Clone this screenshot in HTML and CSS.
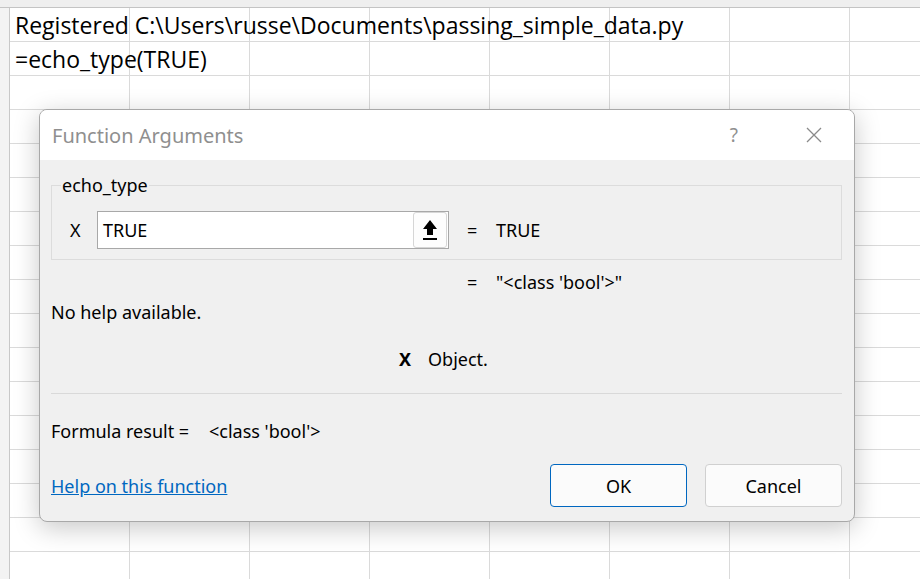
FILE: index.html
```html
<!DOCTYPE html>
<html lang="en">
<head>
<meta charset="utf-8">
<title>Function Arguments</title>
<link rel="stylesheet" href="styles.css">
</head>
<body>
<div class="sheet">
  <div class="colhead"></div>
  <div class="sheet-body">
    <div class="rowhead"></div>
    <div class="cells">
      <div class="cell-row"><span class="cell-text">Registered C:\Users\russe\Documents\passing_simple_data.py</span></div>
      <div class="cell-row"><span class="cell-text">=echo_type(TRUE)</span></div>
    </div>
  </div>

  <div class="dialog">
    <div class="titlebar">
      <span class="title">Function Arguments</span>
      <span class="help-q">?</span>
      <span class="close">
        <svg width="16" height="16" viewBox="0 0 16 16"><path d="M1 1 L15 15 M15 1 L1 15" stroke="#8a8a8a" stroke-width="1.3" fill="none"/></svg>
      </span>
    </div>
    <div class="dlg-body">
      <fieldset class="group">
        <legend class="legend">echo_type</legend>
        <div class="arg-row">
          <span class="arg-label">X</span>
          <div class="arg-input">
            <span class="arg-value">TRUE</span>
            <span class="collapse-btn">
              <svg width="16" height="22" viewBox="0 0 16 22"><path d="M8 1 L15 10 L11 10 L11 16 L5 16 L5 10 L1 10 Z" fill="#000"/><rect x="1" y="19" width="14" height="2" fill="#000"/></svg>
            </span>
          </div>
          <span class="eq">=</span>
          <span class="eq-val">TRUE</span>
        </div>
      </fieldset>
      <div class="result-row">
        <span class="eq">=</span>
        <span class="eq-val">"&lt;class 'bool'&gt;"</span>
      </div>
      <div class="desc">No help available.</div>
      <div class="arg-desc"><span class="arg-desc-x">X</span><span>Object.</span></div>
      <div class="sep"></div>
      <div class="formula"><span class="formula-label">Formula result =</span><span>&lt;class 'bool'&gt;</span></div>
      <div class="footer">
        <a class="link" href="#">Help on this function</a>
        <div class="buttons">
          <button class="btn btn-ok">OK</button>
          <button class="btn">Cancel</button>
        </div>
      </div>
    </div>
  </div>
</div>
</body>
</html>
```

FILE: styles.css
```css
html, body {
  margin: 0;
  padding: 0;
}
body {
  width: 920px;
  height: 579px;
  overflow: hidden;
  background: #fff;
  font-family: "Noto Sans", "DejaVu Sans", sans-serif;
}
.sheet {
  position: relative;
  width: 920px;
  height: 579px;
  display: flex;
  flex-direction: column;
}
.colhead {
  height: 7px;
  background: #efefef;
  border-bottom: 1px solid #c4c4c4;
  flex: none;
}
.sheet-body {
  flex: 1;
  display: flex;
}
.rowhead {
  width: 9px;
  background: #f3f3f3;
  border-right: 1px solid #c8c8c8;
  flex: none;
}
.cells {
  flex: 1;
  background-image:
    repeating-linear-gradient(to right, transparent 0 119px, #dadada 119px 120px),
    repeating-linear-gradient(to bottom, transparent 0 33px, #dadada 33px 34px);
}
.cell-row {
  height: 34px;
  padding-left: 5px;
  display: flex;
  align-items: center;
  white-space: nowrap;
}
.cell-text {
  font-family: "Open Sans", "Noto Sans", sans-serif;
  font-size: 23px;
  color: #000;
  line-height: 30px;
  letter-spacing: 0;
}

.dialog {
  position: absolute;
  left: 39px;
  top: 109px;
  width: 814px;
  height: 411px;
  border: 1px solid #a8a8a8;
  border-radius: 8px;
  background: #f0f0f0;
  box-shadow: 0 6px 26px rgba(0, 0, 0, 0.22);
  overflow: hidden;
  display: flex;
  flex-direction: column;
  font-size: 18px;
  color: #000;
}
.titlebar {
  height: 50px;
  background: #fff;
  display: flex;
  align-items: center;
  padding-left: 12px;
  flex: none;
}
.title {
  font-size: 20px;
  color: #8f8f8f;
  flex: 1;
}
.help-q {
  font-size: 19px;
  color: #8f8f8f;
  margin-right: 68px;
}
.close {
  display: flex;
  margin-right: 32px;
}
.dlg-body {
  flex: 1;
  padding: 15px 12px 0 11px;
  display: flex;
  flex-direction: column;
}
.group {
  margin: 0;
  border: 1px solid #dcdcdc;
  padding: 16px 0 10px 18px;
}
.legend {
  padding: 0 1px;
  margin-left: -9px;
  line-height: 20px;
}
.arg-row {
  display: flex;
  align-items: center;
}
.arg-label {
  width: 27px;
}
.arg-input {
  width: 350px;
  height: 36px;
  background: #fff;
  border: 1px solid #a8a8a8;
  display: flex;
  align-items: center;
  justify-content: space-between;
}
.arg-value {
  padding-left: 5px;
}
.collapse-btn {
  width: 32px;
  height: 34px;
  margin-right: 1px;
  border: 1px solid #d6d6d6;
  border-radius: 3px;
  background: #fdfdfd;
  display: flex;
  align-items: center;
  justify-content: center;
}
.eq {
  margin-left: 18px;
  width: 29px;
}
.result-row {
  display: flex;
  margin-top: 12px;
  padding-left: 398px;
  line-height: 20px;
}
.desc {
  margin-top: 10px;
  line-height: 20px;
}
.arg-desc {
  margin-top: 27px;
  padding-left: 348px;
  line-height: 20px;
  display: flex;
}
.arg-desc-x {
  font-weight: bold;
  width: 29px;
}
.sep {
  margin-top: 24px;
  height: 1px;
  background: #d9d9d9;
}
.formula {
  margin-top: 27px;
  line-height: 20px;
  display: flex;
}
.formula-label {
  width: 158px;
}
.footer {
  margin-top: 23px;
  display: flex;
  align-items: center;
  justify-content: space-between;
}
.link {
  color: #0067c0;
  text-decoration: underline;
  line-height: 20px;
}
.buttons {
  display: flex;
  gap: 18px;
}
.btn {
  width: 137px;
  height: 43px;
  font-family: inherit;
  font-size: 18px;
  color: #000;
  background: #fbfbfb;
  border: 1px solid #d0d0d0;
  border-radius: 4px;
  padding: 0;
}
.btn-ok {
  border-color: #0067c0;
}
```
